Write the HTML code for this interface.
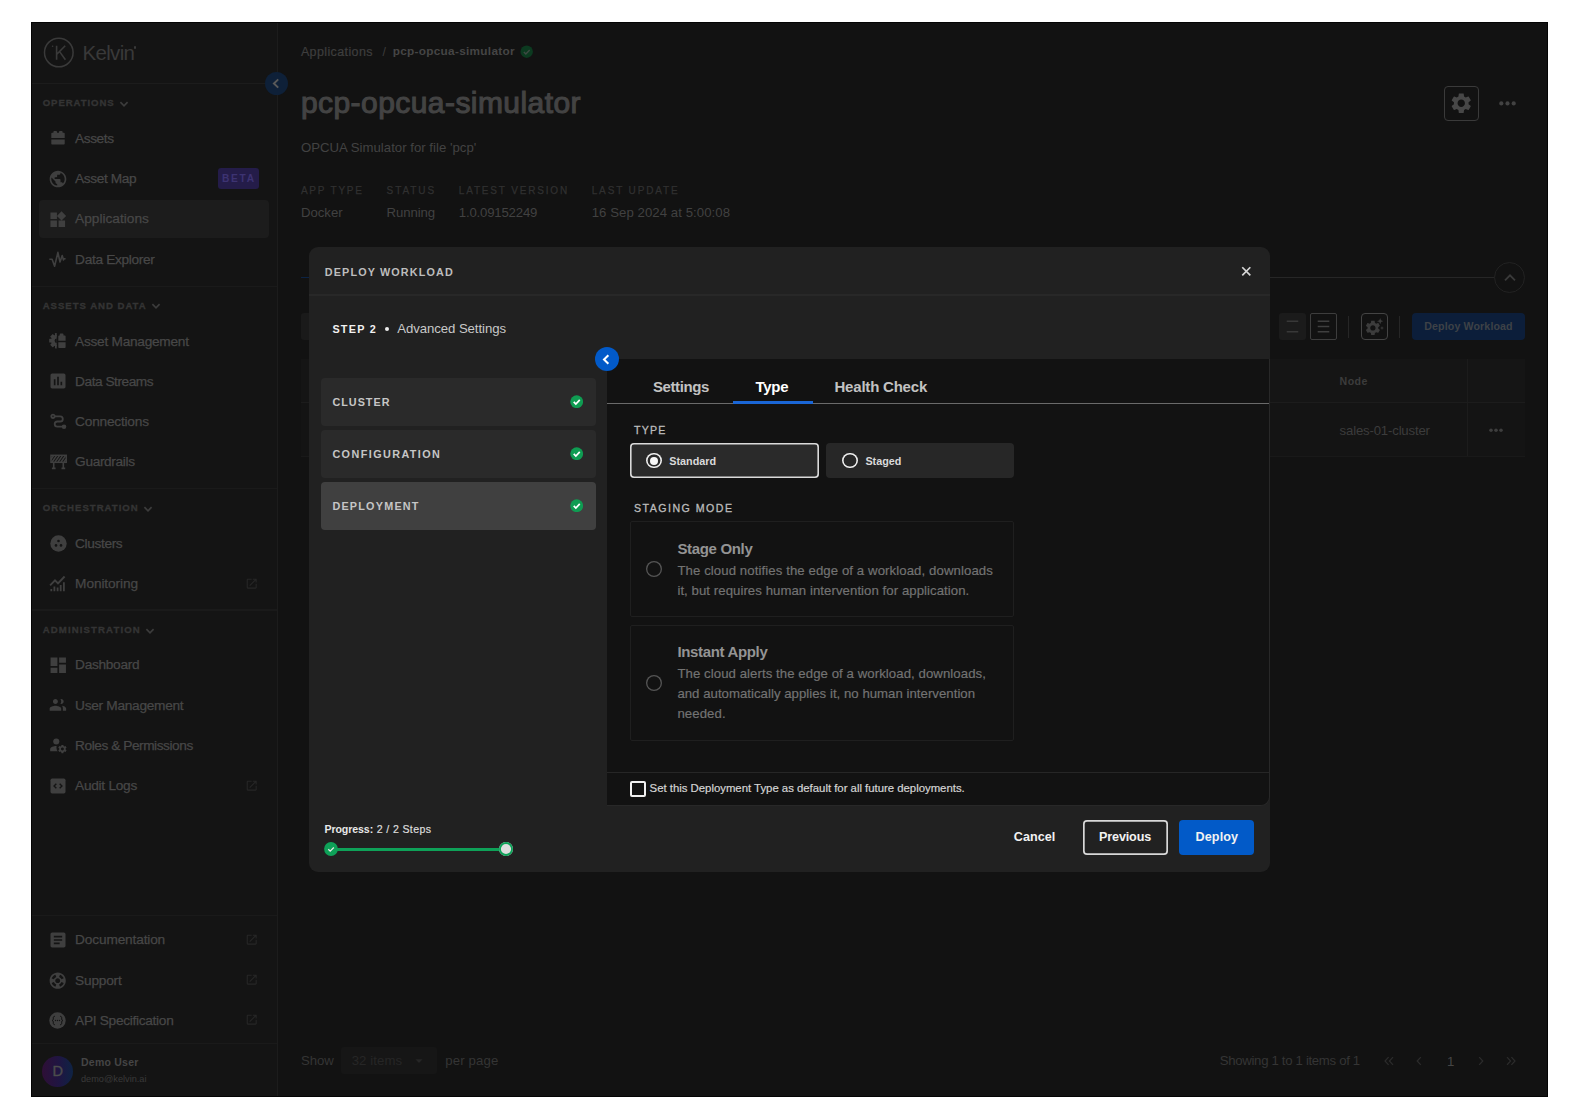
<!DOCTYPE html>
<html lang="en"><head><meta charset="utf-8"><title>Kelvin - Deploy Workload</title><style>
html,body{margin:0;padding:0;background:#fff;}
body{width:1580px;height:1120px;position:relative;overflow:hidden;font-family:"Liberation Sans",Arial,sans-serif;}
.r{position:absolute;box-sizing:border-box;display:block;}
.t{position:absolute;white-space:nowrap;line-height:1;}
</style></head><body>
<div class="r" style="left:31.0px;top:22.0px;width:1517.0px;height:1075.0px;background:#121212;border:1px solid #040404;"></div>
<div class="r" style="left:32.0px;top:23.0px;width:245.5px;height:1073.0px;background:#141414;"></div>
<div class="r" style="left:276.5px;top:23.0px;width:1.5px;height:1073.0px;background:#1c1c1c;"></div>
<svg class="r" style="left:42px;top:36px" width="34" height="34" viewBox="0 0 34 34" fill="none" stroke="#3a3a3a"><circle cx="16.800" cy="16.500" r="14.300" stroke-width="1.500"/><path d="M14.600 9.800V23.800M23.200 9.800L14.800 18.200M17.600 15.600L23.400 23.800" stroke-width="1.600"/><circle cx="10.6" cy="10.3" r="0.8" fill="#3a3a3a" stroke="none"/></svg>
<span class="t" style="left:82.4px;top:42.8px;font-size:20.5px;font-weight:400;color:#393939;letter-spacing:-0.66px;">Kelvin</span>
<div class="r" style="left:134.1px;top:46.4px;width:2.3px;height:2.3px;background:#3a3a3a;border-radius:2px;"></div>
<div class="r" style="left:32.0px;top:82.6px;width:245.0px;height:1.5px;background:#1c1c1c;"></div>
<div class="r" style="left:265.2px;top:71.7px;width:23.2px;height:23.2px;background:#0e2038;border-radius:12px;"></div>
<svg class="r" style="left:270.0px;top:76.8px;" width="13" height="13" viewBox="0 0 12 12" fill="#3d3d3d"><path d="M7.600 2.200L3.600 6l4 3.800" fill="none" stroke="#595959" stroke-width="1.800"/></svg>
<span class="t" style="left:42.7px;top:98.2px;font-size:9.6px;font-weight:700;color:#343434;letter-spacing:0.92px;-webkit-text-stroke:0.3px #343434;">OPERATIONS</span>
<svg class="r" style="left:119.0px;top:98.8px;" width="10" height="10" viewBox="0 0 10 10" fill="#3d3d3d"><path d="M1.400 3.200L5 6.800l3.600-3.600" fill="none" stroke="#3c3c3c" stroke-width="1.700"/></svg>
<span class="t" style="left:75.1px;top:131.5px;font-size:13.7px;font-weight:400;color:#474747;letter-spacing:-0.43px;-webkit-text-stroke:0.25px #474747;">Assets</span>
<svg class="r" style="left:49.9px;top:130.3px;" width="16" height="16" viewBox="0 0 16 16" fill="#3f3f3f"><path d="M1.3 7.9V3.6c0-.5.3-.8.8-.8h1.3V1.9c0-.5.3-.8.8-.8h2c.5 0 .8.3.8.8v.9h2V1.9c0-.5.3-.8.8-.8h2c.5 0 .8.3.8.8v.9h1.300c.5 0 .8.3.8.8v4.300zM1.3 9.500h13.400v4.200c0 .5-.3.8-.8.8H2.100c-.5 0-.8-.3-.8-.8z"/></svg>
<span class="t" style="left:75.1px;top:171.8px;font-size:13.7px;font-weight:400;color:#474747;letter-spacing:-0.38px;-webkit-text-stroke:0.25px #474747;">Asset Map</span>
<svg class="r" style="left:47.9px;top:168.6px;" width="20" height="20" viewBox="0 0 24 24" fill="#3f3f3f"><path d="M12 2C6.48 2 2 6.48 2 12s4.48 10 10 10 10-4.48 10-10S17.52 2 12 2zm-1 17.93c-3.95-.49-7-3.85-7-7.93 0-.62.08-1.21.21-1.79L9 15v1c0 1.1.9 2 2 2v1.93zm6.9-2.54c-.26-.81-1-1.39-1.9-1.39h-1v-3c0-.55-.45-1-1-1H8v-2h2c.55 0 1-.45 1-1V7h2c1.1 0 2-.9 2-2v-.41c2.93 1.19 5 4.06 5 7.41 0 2.08-.8 3.97-2.1 5.39z"/></svg>
<div class="r" style="left:218.0px;top:167.8px;width:41.0px;height:21.4px;background:#241c49;border-radius:3px;"></div>
<span class="t" style="left:222.0px;top:173.6px;font-size:10.2px;font-weight:700;color:#3d3372;letter-spacing:1.72px;">BETA</span>
<div class="r" style="left:38.8px;top:199.8px;width:230.2px;height:37.8px;background:#1c1c1c;border-radius:4px;"></div>
<span class="t" style="left:75.1px;top:212.2px;font-size:13.7px;font-weight:400;color:#474747;letter-spacing:0.00px;-webkit-text-stroke:0.25px #474747;">Applications</span>
<svg class="r" style="left:47.8px;top:209.6px;" width="19.5" height="19.5" viewBox="0 0 24 24" fill="#3f3f3f"><path d="M13 13v8h8v-8h-8zM3 21h8v-8H3v8zM3 3v8h8V3H3zm13.66-1.31L11 7.34 16.660 13l5.660-5.660-5.660-5.650z"/></svg>
<span class="t" style="left:75.1px;top:252.5px;font-size:13.7px;font-weight:400;color:#474747;letter-spacing:-0.33px;-webkit-text-stroke:0.25px #474747;">Data Explorer</span>
<svg class="r" style="left:49.4px;top:250.8px;" width="17" height="17" viewBox="0 0 17 17" fill="#3d3d3d"><path d="M0.300 8.200h2.800l2.500 7L8.900 1.400l2.100 9.600 2.200-6.400 1.300 4.300.7-1.100h1.400" fill="none" stroke="#3f3f3f" stroke-width="1.600" stroke-linejoin="round"/></svg>
<div class="r" style="left:32.0px;top:285.6px;width:245.0px;height:1.3px;background:#1a1a1a;"></div>
<span class="t" style="left:42.7px;top:300.5px;font-size:9.6px;font-weight:700;color:#343434;letter-spacing:0.97px;-webkit-text-stroke:0.3px #343434;">ASSETS AND DATA</span>
<svg class="r" style="left:151.0px;top:301.1px;" width="10" height="10" viewBox="0 0 10 10" fill="#3d3d3d"><path d="M1.400 3.200L5 6.800l3.600-3.600" fill="none" stroke="#3c3c3c" stroke-width="1.700"/></svg>
<span class="t" style="left:75.1px;top:334.5px;font-size:13.7px;font-weight:400;color:#474747;letter-spacing:-0.27px;-webkit-text-stroke:0.25px #474747;">Asset Management</span>
<svg class="r" style="left:49.4px;top:332.8px;" width="17" height="17" viewBox="0 0 17 17" fill="#3f3f3f"><defs><clipPath id="hg"><rect x="0" y="0" width="7.700" height="17"/></clipPath></defs><g clip-path="url(#hg)"><g transform="translate(7.900,7.700)"><circle r="5.900"/><rect x="-1.900" y="-7.700" width="3.800" height="3.500" rx=".4" transform="rotate(0)"/><rect x="-1.900" y="-7.700" width="3.800" height="3.500" rx=".4" transform="rotate(45)"/><rect x="-1.900" y="-7.700" width="3.800" height="3.500" rx=".4" transform="rotate(90)"/><rect x="-1.900" y="-7.700" width="3.800" height="3.500" rx=".4" transform="rotate(135)"/><rect x="-1.900" y="-7.700" width="3.800" height="3.500" rx=".4" transform="rotate(180)"/><rect x="-1.900" y="-7.700" width="3.800" height="3.500" rx=".4" transform="rotate(225)"/><rect x="-1.900" y="-7.700" width="3.800" height="3.500" rx=".4" transform="rotate(270)"/><rect x="-1.900" y="-7.700" width="3.800" height="3.500" rx=".4" transform="rotate(315)"/><circle r="2.300" fill="#141414"/></g></g><path d="M9.300 7.800V3.300c0-.5.300-.8.800-.8h.6V1.400c0-.5.300-.8.800-.8h2.200c.5 0 .8.300.8.800v1.100h1.300c.5 0 .8.300.8.800v4.500zM9.300 9.300h7.300v4.900c0 .5-.3.8-.8.800h-5.700c-.5 0-.8-.3-.8-.8z"/></svg>
<span class="t" style="left:75.1px;top:374.5px;font-size:13.7px;font-weight:400;color:#474747;letter-spacing:-0.47px;-webkit-text-stroke:0.25px #474747;">Data Streams</span>
<svg class="r" style="left:47.9px;top:371.3px;" width="20" height="20" viewBox="0 0 24 24" fill="#3f3f3f"><path d="M19 3H5c-1.100 0-2 .9-2 2v14c0 1.100.9 2 2 2h14c1.100 0 2-.9 2-2V5c0-1.100-.9-2-2-2zM9 17H7v-7h2v7zm4 0h-2V7h2v10zm4 0h-2v-4h2v4z"/></svg>
<span class="t" style="left:75.1px;top:414.6px;font-size:13.7px;font-weight:400;color:#474747;letter-spacing:-0.22px;-webkit-text-stroke:0.25px #474747;">Connections</span>
<svg class="r" style="left:50.0px;top:412.9px;" width="17" height="17" viewBox="0 0 17 17" fill="#3f3f3f"><g fill="none" stroke="#3f3f3f" stroke-width="1.800"><circle cx="3" cy="3.300" r="1.700"/><path d="M4.500 3.300h5.700a2.600 2.600 0 0 1 0 5.200H7.300a2.600 2.600 0 0 0 0 5.200h5"/></g><circle cx="14" cy="13.700" r="2.300"/></svg>
<span class="t" style="left:75.1px;top:455.1px;font-size:13.7px;font-weight:400;color:#474747;letter-spacing:-0.36px;-webkit-text-stroke:0.25px #474747;">Guardrails</span>
<svg class="r" style="left:49.9px;top:453.4px;" width="17" height="17" viewBox="0 0 17 17" fill="#3d3d3d"><g fill="none" stroke="#3f3f3f"><rect x="1" y="2.300" width="15.200" height="7" stroke-width="1.500"/><path d="M2 9l4.500-6.400M5 9l4.500-6.400M8 9l4.500-6.400M11 9l4.500-6.400M0.900 6.500l2.700-3.900M14 9l2-2.900" stroke-width="1.500"/><path d="M3.700 9.400v5.800M13.300 9.400v5.800M1.900 15.400h3.700M11.500 15.400h3.700" stroke-width="1.600"/></g></svg>
<div class="r" style="left:32.0px;top:487.6px;width:245.0px;height:1.3px;background:#1a1a1a;"></div>
<span class="t" style="left:42.7px;top:503.1px;font-size:9.6px;font-weight:700;color:#343434;letter-spacing:1.01px;-webkit-text-stroke:0.3px #343434;">ORCHESTRATION</span>
<svg class="r" style="left:143.0px;top:503.7px;" width="10" height="10" viewBox="0 0 10 10" fill="#3d3d3d"><path d="M1.400 3.200L5 6.800l3.600-3.600" fill="none" stroke="#3c3c3c" stroke-width="1.700"/></svg>
<span class="t" style="left:75.1px;top:537.0px;font-size:13.7px;font-weight:400;color:#474747;letter-spacing:-0.37px;-webkit-text-stroke:0.25px #474747;">Clusters</span>
<svg class="r" style="left:49.8px;top:535.3px;" width="17" height="17" viewBox="0 0 17 17" fill="#3f3f3f"><circle cx="8.500" cy="8.500" r="8.200"/><g fill="#141414"><circle cx="8.500" cy="6" r="1.300"/><circle cx="6" cy="10.400" r="1.300"/><circle cx="11" cy="10.400" r="1.300"/></g></svg>
<span class="t" style="left:75.1px;top:576.9px;font-size:13.7px;font-weight:400;color:#474747;letter-spacing:-0.11px;-webkit-text-stroke:0.25px #474747;">Monitoring</span>
<svg class="r" style="left:49.4px;top:575.2px;" width="17" height="17" viewBox="0 0 17 17" fill="#3f3f3f"><path d="M1.100 10.300L6 5.300l3 3 6.600-6.800" fill="none" stroke="#3f3f3f" stroke-width="1.900"/><path d="M1.400 14h1.800v2.300H1.400zM4.500 11.500h1.800v4.800H4.500zM7.700 12.600h1.800v3.700H7.700zM10.800 10h1.800v6.300h-1.800zM14 7.300h1.800v9H14z"/></svg>
<svg class="r" style="left:244.9px;top:576.5px;" width="13.4" height="13.4" viewBox="0 0 24 24" fill="#262626"><path d="M19 19H5V5h7V3H5c-1.11 0-2 .9-2 2v14c0 1.1.89 2 2 2h14c1.1 0 2-.9 2-2v-7h-2v7zM14 3v2h3.59l-9.83 9.83 1.41 1.41L19 6.41V10h2V3h-7z"/></svg>
<div class="r" style="left:32.0px;top:609.4px;width:245.0px;height:1.3px;background:#1a1a1a;"></div>
<span class="t" style="left:42.7px;top:625.2px;font-size:9.6px;font-weight:700;color:#343434;letter-spacing:1.12px;-webkit-text-stroke:0.3px #343434;">ADMINISTRATION</span>
<svg class="r" style="left:145.0px;top:625.8px;" width="10" height="10" viewBox="0 0 10 10" fill="#3d3d3d"><path d="M1.400 3.200L5 6.800l3.600-3.600" fill="none" stroke="#3c3c3c" stroke-width="1.700"/></svg>
<span class="t" style="left:75.1px;top:658.4px;font-size:13.7px;font-weight:400;color:#474747;letter-spacing:-0.31px;-webkit-text-stroke:0.25px #474747;">Dashboard</span>
<svg class="r" style="left:47.6px;top:655.0px;" width="20.5" height="20.5" viewBox="0 0 24 24" fill="#3f3f3f"><path d="M3 13h8V3H3v10zm0 8h8v-6H3v6zm10 0h8V11h-8v10zm0-18v6h8V3h-8z"/></svg>
<span class="t" style="left:75.1px;top:698.7px;font-size:13.7px;font-weight:400;color:#474747;letter-spacing:-0.29px;-webkit-text-stroke:0.25px #474747;">User Management</span>
<svg class="r" style="left:48.0px;top:694.8px;" width="19.8" height="19.8" viewBox="0 0 24 24" fill="#3f3f3f"><path d="M16 11c1.660 0 2.990-1.340 2.990-3S17.660 5 16 5c-.320 0-.630.050-.910.140.570.810.9 1.790.9 2.860s-.340 2.040-.9 2.860c.280.090.590.140.910.140zM9 11c1.660 0 3-1.340 3-3S10.660 5 9 5 6 6.340 6 8s1.340 3 3 3zm0 2c-2.330 0-7 1.170-7 3.500V19h14v-2.500c0-2.330-4.670-3.500-7-3.500zm7.760.160c.830.730 1.240 1.630 1.240 3.340V19h4v-2.500c0-1.980-3.120-3.090-5.240-3.340z" transform="translate(0,0)"/></svg>
<span class="t" style="left:75.1px;top:739.2px;font-size:13.7px;font-weight:400;color:#474747;letter-spacing:-0.45px;-webkit-text-stroke:0.25px #474747;">Roles &amp; Permissions</span>
<svg class="r" style="left:48.7px;top:736.0px;" width="18.4" height="18.4" viewBox="0 0 24 24" fill="#3f3f3f"><circle cx="9.500" cy="7.200" r="4"/><path d="M9.900 13.100C7 12.900 1.500 14.300 1.500 17.200V20h9.800c-1.700-1.900-1.600-5.300-1.400-6.900z"/><path d="M21.700 17.700c0-.200 0-.400 0-.600s0-.500-.100-.700l1.300-1-1.300-2.200-1.500.600c-.400-.300-.700-.500-1.100-.600L18.800 11.600h-2.600l-.200 1.600c-.400.200-.800.400-1.100.600l-1.500-.600-1.300 2.200 1.300 1c0 .200-.100.400-.100.700s0 .400.100.600l-1.300 1 1.300 2.200 1.500-.6c.300.300.700.500 1.100.600l.2 1.600h2.600l.200-1.600c.400-.200.800-.400 1.100-.600l1.500.6 1.300-2.200zm-4.200 1.200c-1 0-1.900-.8-1.900-1.900s.800-1.900 1.900-1.900 1.900.8 1.900 1.900-.900 1.900-1.900 1.900z"/></svg>
<span class="t" style="left:75.1px;top:779.4px;font-size:13.7px;font-weight:400;color:#474747;letter-spacing:-0.28px;-webkit-text-stroke:0.25px #474747;">Audit Logs</span>
<svg class="r" style="left:47.9px;top:776.2px;" width="20" height="20" viewBox="0 0 24 24" fill="#3f3f3f"><rect x="3" y="3" width="18" height="18" rx="2"/><path d="M10 9.300L7.300 12l2.700 2.700M14 9.300l2.700 2.700-2.700 2.700" fill="none" stroke="#141414" stroke-width="1.700"/></svg>
<svg class="r" style="left:244.9px;top:779.0px;" width="13.4" height="13.4" viewBox="0 0 24 24" fill="#262626"><path d="M19 19H5V5h7V3H5c-1.11 0-2 .9-2 2v14c0 1.1.89 2 2 2h14c1.1 0 2-.9 2-2v-7h-2v7zM14 3v2h3.59l-9.83 9.83 1.41 1.41L19 6.41V10h2V3h-7z"/></svg>
<div class="r" style="left:32.0px;top:914.9px;width:245.0px;height:1.3px;background:#1a1a1a;"></div>
<span class="t" style="left:75.1px;top:933.1px;font-size:13.7px;font-weight:400;color:#474747;letter-spacing:-0.16px;-webkit-text-stroke:0.25px #474747;">Documentation</span>
<svg class="r" style="left:47.9px;top:929.9px;" width="20" height="20" viewBox="0 0 24 24" fill="#3f3f3f"><path d="M19 3H5c-1.100 0-2 .9-2 2v14c0 1.100.9 2 2 2h14c1.100 0 2-.9 2-2V5c0-1.100-.9-2-2-2zm-5 14H7v-2h7v2zm3-4H7v-2h10v2zm0-4H7V7h10v2z"/></svg>
<svg class="r" style="left:244.9px;top:932.7px;" width="13.4" height="13.4" viewBox="0 0 24 24" fill="#262626"><path d="M19 19H5V5h7V3H5c-1.11 0-2 .9-2 2v14c0 1.1.89 2 2 2h14c1.1 0 2-.9 2-2v-7h-2v7zM14 3v2h3.59l-9.83 9.83 1.41 1.41L19 6.41V10h2V3h-7z"/></svg>
<span class="t" style="left:75.1px;top:973.5px;font-size:13.7px;font-weight:400;color:#474747;letter-spacing:-0.22px;-webkit-text-stroke:0.25px #474747;">Support</span>
<svg class="r" style="left:48.2px;top:970.6px;" width="19.4" height="19.4" viewBox="0 0 24 24" fill="#3f3f3f"><path d="M12 2C6.480 2 2 6.480 2 12s4.480 10 10 10 10-4.480 10-10S17.520 2 12 2zm7.460 7.120l-2.780 1.150c-.51-1.360-1.580-2.440-2.950-2.940l1.150-2.780c2.100.8 3.770 2.470 4.580 4.570zM12 15c-1.660 0-3-1.340-3-3s1.340-3 3-3 3 1.340 3 3-1.340 3-3 3zM9.130 4.540l1.170 2.780c-1.380.5-2.470 1.590-2.980 2.970L4.540 9.130c.81-2.110 2.480-3.780 4.590-4.590zM4.540 14.870l2.780-1.150c.51 1.380 1.590 2.460 2.970 2.960l-1.170 2.780c-2.100-.81-3.770-2.480-4.580-4.590zm10.340 4.590l-1.150-2.780c1.370-.51 2.450-1.590 2.950-2.970l2.780 1.170c-.81 2.100-2.480 3.770-4.580 4.580z"/></svg>
<svg class="r" style="left:244.9px;top:973.1px;" width="13.4" height="13.4" viewBox="0 0 24 24" fill="#262626"><path d="M19 19H5V5h7V3H5c-1.11 0-2 .9-2 2v14c0 1.1.89 2 2 2h14c1.1 0 2-.9 2-2v-7h-2v7zM14 3v2h3.59l-9.83 9.83 1.41 1.41L19 6.41V10h2V3h-7z"/></svg>
<span class="t" style="left:75.1px;top:1013.6px;font-size:13.7px;font-weight:400;color:#474747;letter-spacing:-0.30px;-webkit-text-stroke:0.25px #474747;">API Specification</span>
<svg class="r" style="left:49.4px;top:1011.9px;" width="17" height="17" viewBox="0 0 17 17" fill="#3f3f3f"><circle cx="8.500" cy="8.500" r="8.200"/><g fill="none" stroke="#141414" stroke-width="1"><path d="M6 4.300c-1.300 0-1.700.5-1.700 1.500v1.300c0 .8-.4 1.300-1.100 1.400.7.100 1.100.6 1.100 1.400v1.300c0 1 .4 1.500 1.700 1.500M11 4.300c1.300 0 1.700.5 1.700 1.500v1.300c0 .8.400 1.300 1.100 1.400-.7.100-1.100.6-1.100 1.400v1.300c0 1-.4 1.500-1.700 1.500"/></g><g fill="#141414"><circle cx="6.500" cy="8.500" r=".7"/><circle cx="8.500" cy="8.500" r=".7"/><circle cx="10.500" cy="8.500" r=".7"/></g></svg>
<svg class="r" style="left:244.9px;top:1013.2px;" width="13.4" height="13.4" viewBox="0 0 24 24" fill="#262626"><path d="M19 19H5V5h7V3H5c-1.11 0-2 .9-2 2v14c0 1.1.89 2 2 2h14c1.1 0 2-.9 2-2v-7h-2v7zM14 3v2h3.59l-9.83 9.83 1.41 1.41L19 6.41V10h2V3h-7z"/></svg>
<div class="r" style="left:32.0px;top:1042.6px;width:245.0px;height:1.3px;background:#1a1a1a;"></div>
<div class="r" style="left:42.2px;top:1055.5px;width:31.2px;height:31.2px;background:linear-gradient(90deg,#2e0f36 0%,#1f1542 55%,#0e2344 100%);border-radius:16px;"></div>
<span class="t" style="left:52.5px;top:1063.5px;font-size:14.5px;font-weight:400;color:#4c4c4c;-webkit-text-stroke:0.4px #4c4c4c;">D</span>
<span class="t" style="left:81.0px;top:1057.2px;font-size:10.5px;font-weight:700;color:#454545;letter-spacing:0.24px;">Demo User</span>
<span class="t" style="left:81.0px;top:1074.8px;font-size:9.2px;font-weight:400;color:#3a3a3a;letter-spacing:0.00px;">demo@kelvin.ai</span>
<span class="t" style="left:300.9px;top:45.9px;font-size:12.5px;font-weight:400;color:#3e3e3e;letter-spacing:0.38px;-webkit-text-stroke:0.2px #3e3e3e;">Applications</span>
<span class="t" style="left:382.6px;top:46.0px;font-size:12.3px;font-weight:400;color:#3c3c3c;">/</span>
<span class="t" style="left:392.7px;top:45.9px;font-size:11.8px;font-weight:700;color:#454545;letter-spacing:0.29px;">pcp-opcua-simulator</span>
<svg class="r" style="left:520.3px;top:44.9px;" width="13.4" height="13.4" viewBox="0 0 14 14" fill="#3d3d3d"><circle cx="7" cy="7" r="6.500" fill="#0c3a20"/><path d="M4 7.200l2.100 2.100L10.100 5.200" fill="none" stroke="#3f4a44" stroke-width="1.500"/></svg>
<span class="t" style="left:300.9px;top:87.6px;font-size:30px;font-weight:400;color:#434343;letter-spacing:0.44px;-webkit-text-stroke:1.1px #434343;">pcp-opcua-simulator</span>
<span class="t" style="left:300.9px;top:141.1px;font-size:13.2px;font-weight:400;color:#424242;letter-spacing:0.01px;">OPCUA Simulator for file 'pcp'</span>
<span class="t" style="left:300.9px;top:186.1px;font-size:10px;font-weight:400;color:#303030;letter-spacing:1.79px;-webkit-text-stroke:0.25px #303030;">APP TYPE</span>
<span class="t" style="left:386.6px;top:186.1px;font-size:10px;font-weight:400;color:#303030;letter-spacing:1.90px;-webkit-text-stroke:0.25px #303030;">STATUS</span>
<span class="t" style="left:458.8px;top:186.1px;font-size:10px;font-weight:400;color:#303030;letter-spacing:1.82px;-webkit-text-stroke:0.25px #303030;">LATEST VERSION</span>
<span class="t" style="left:591.7px;top:186.1px;font-size:10px;font-weight:400;color:#303030;letter-spacing:1.86px;-webkit-text-stroke:0.25px #303030;">LAST UPDATE</span>
<span class="t" style="left:300.9px;top:205.8px;font-size:13.2px;font-weight:400;color:#414141;letter-spacing:0.01px;">Docker</span>
<span class="t" style="left:386.6px;top:205.8px;font-size:13.2px;font-weight:400;color:#414141;letter-spacing:-0.11px;">Running</span>
<span class="t" style="left:458.8px;top:205.8px;font-size:13.2px;font-weight:400;color:#414141;letter-spacing:-0.19px;">1.0.09152249</span>
<span class="t" style="left:591.7px;top:205.8px;font-size:13.2px;font-weight:400;color:#414141;letter-spacing:0.06px;">16 Sep 2024 at 5:00:08</span>
<div class="r" style="left:1444.0px;top:86.0px;width:34.5px;height:35.0px;border:1.5px solid #3a3a3a;border-radius:4px;"></div>
<svg class="r" style="left:1449.0px;top:91.2px;" width="24.5" height="24.5" viewBox="0 0 24 24" fill="#474747"><path d="M19.140 12.940c.040-.3.060-.610.060-.940 0-.320-.020-.640-.070-.940l2.030-1.580c.180-.140.230-.410.120-.610l-1.920-3.320c-.120-.220-.370-.290-.590-.220l-2.390.960c-.5-.380-1.030-.7-1.620-.940l-.360-2.540c-.040-.240-.240-.410-.480-.410h-3.840c-.240 0-.430.170-.470.410l-.360 2.540c-.590.240-1.130.570-1.620.940l-2.390-.960c-.220-.080-.470 0-.590.220L2.740 8.870c-.120.210-.080.470.120.610l2.030 1.580c-.050.3-.090.630-.090.940s.020.640.070.940l-2.030 1.580c-.180.140-.230.410-.120.610l1.920 3.320c.120.220.370.290.590.220l2.390-.960c.5.380 1.030.7 1.620.940l.360 2.540c.050.240.240.410.480.410h3.840c.240 0 .440-.170.470-.410l.360-2.540c.590-.240 1.130-.560 1.620-.940l2.390.960c.220.080.470 0 .590-.220l1.920-3.320c.120-.220.070-.470-.120-.610l-2.010-1.580zM12 15.600c-1.980 0-3.600-1.620-3.600-3.600s1.620-3.600 3.600-3.600 3.600 1.620 3.600 3.600-1.620 3.600-3.600 3.600z"/></svg>
<svg class="r" style="left:1497px;top:98px" width="22" height="11" viewBox="0 0 22 11" fill="#424242"><circle cx="4.300" cy="5.400" r="2.100"/><circle cx="10.500" cy="5.400" r="2.100"/><circle cx="16.700" cy="5.400" r="2.100"/></svg>
<div class="r" style="left:300.8px;top:276.5px;width:10.0px;height:1.8px;background:#0c2344;"></div>
<div class="r" style="left:1269.0px;top:276.9px;width:226.0px;height:1.2px;background:#262626;"></div>
<div class="r" style="left:1494.3px;top:262.3px;width:30.6px;height:30.6px;background:#121212;border:1px solid #222;border-radius:16px;"></div>
<svg class="r" style="left:1502.6px;top:270.6px;" width="14" height="14" viewBox="0 0 14 14" fill="#3d3d3d"><path d="M2 9.300L7 4.300l5 5" fill="none" stroke="#3a3a3a" stroke-width="1.800"/></svg>
<div class="r" style="left:301.0px;top:312.8px;width:20.0px;height:27.0px;background:#1a1a1a;border-radius:3px;"></div>
<div class="r" style="left:1279.0px;top:313.0px;width:27.0px;height:27.0px;background:#1b1b1b;border-radius:3px;"></div>
<svg class="r" style="left:1279px;top:313px" width="27" height="27" viewBox="0 0 27 27" stroke="#383838" stroke-width="1.600"><path d="M7.700 8.300h11.600M7.700 18.700h11.600"/></svg>
<div class="r" style="left:1309.8px;top:313.0px;width:27.2px;height:27.0px;border:1px solid #3d3d3d;border-radius:2px;"></div>
<svg class="r" style="left:1310px;top:313px" width="27" height="27" viewBox="0 0 27 27" stroke="#3f3f3f" stroke-width="1.600"><path d="M7.700 8.300h11.600M7.700 13.500h11.600M7.700 18.700h11.600"/></svg>
<div class="r" style="left:1348.2px;top:315.5px;width:1.0px;height:22.0px;background:#262626;"></div>
<div class="r" style="left:1360.8px;top:313.0px;width:27.2px;height:27.0px;border:1px solid #444;border-radius:4px;"></div>
<svg class="r" style="left:1363.7px;top:318.6px;" width="17.8" height="17.8" viewBox="0 0 24 24" fill="#3c3c3c"><path d="M19.140 12.940c.040-.3.060-.610.060-.940 0-.320-.020-.640-.070-.940l2.030-1.580c.180-.140.230-.410.120-.610l-1.920-3.320c-.120-.220-.370-.290-.590-.220l-2.390.960c-.5-.380-1.030-.7-1.620-.940l-.360-2.540c-.040-.240-.240-.410-.480-.410h-3.840c-.240 0-.430.170-.470.410l-.360 2.540c-.590.240-1.130.570-1.620.940l-2.390-.960c-.220-.080-.470 0-.590.220L2.740 8.870c-.120.210-.080.470.120.610l2.030 1.580c-.050.3-.090.630-.090.940s.020.640.070.940l-2.030 1.580c-.180.140-.230.410-.120.610l1.920 3.320c.120.220.370.290.590.220l2.390-.960c.5.380 1.030.7 1.620.940l.360 2.540c.050.240.240.410.480.410h3.840c.240 0 .440-.170.470-.410l.360-2.540c.590-.240 1.130-.560 1.620-.940l2.390.960c.220.080.470 0 .590-.220l1.920-3.320c.120-.220.070-.470-.120-.610l-2.010-1.580zM12 15.600c-1.980 0-3.600-1.620-3.600-3.600s1.620-3.600 3.600-3.600 3.600 1.620 3.600 3.600-1.620 3.600-3.600 3.600z"/></svg>
<svg class="r" style="left:1377.0px;top:318.0px;" width="6.4" height="6.4" viewBox="0 0 6 6" fill="#3c3c3c"><path d="M3 0l.8 2.200L6 3l-2.200.8L3 6l-.8-2.200L0 3l2.200-.8z"/></svg>
<svg class="r" style="left:1380.0px;top:325.6px;" width="4" height="4" viewBox="0 0 6 6" fill="#3c3c3c"><path d="M3 0l.8 2.200L6 3l-2.200.8L3 6l-.8-2.200L0 3l2.200-.8z"/></svg>
<div class="r" style="left:1399.2px;top:315.5px;width:1.0px;height:22.0px;background:#262626;"></div>
<div class="r" style="left:1411.7px;top:313.0px;width:113.3px;height:27.0px;background:#0c1e3a;border-radius:4px;"></div>
<span class="t" style="left:1424.3px;top:321.2px;font-size:10.6px;font-weight:700;color:#3e4247;letter-spacing:0.14px;">Deploy Workload</span>
<div class="r" style="left:301.0px;top:358.7px;width:1224.0px;height:44.0px;background:#151515;"></div>
<div class="r" style="left:301.0px;top:402.4px;width:1224.0px;height:1.0px;background:#1c1c1c;"></div>
<div class="r" style="left:301.0px;top:403.4px;width:1224.0px;height:52.8px;background:#141414;"></div>
<div class="r" style="left:301.0px;top:456.2px;width:1224.0px;height:1.0px;background:#191919;"></div>
<div class="r" style="left:1467.0px;top:358.7px;width:1.0px;height:97.5px;background:#1c1c1c;"></div>
<span class="t" style="left:1339.6px;top:376.1px;font-size:10.6px;font-weight:700;color:#3c3c3c;letter-spacing:0.44px;">Node</span>
<span class="t" style="left:1339.6px;top:424.0px;font-size:13.2px;font-weight:400;color:#3c3c3c;letter-spacing:-0.18px;">sales-01-cluster</span>
<svg class="r" style="left:1486px;top:425px" width="20" height="11" viewBox="0 0 20 11" fill="#3e3e3e"><circle cx="5" cy="5.300" r="1.750"/><circle cx="10" cy="5.300" r="1.750"/><circle cx="15" cy="5.300" r="1.750"/></svg>
<span class="t" style="left:300.9px;top:1054.2px;font-size:13.2px;font-weight:400;color:#353535;">Show</span>
<div class="r" style="left:341.3px;top:1047.0px;width:96.0px;height:27.0px;background:#161616;border-radius:3px;"></div>
<span class="t" style="left:351.7px;top:1054.2px;font-size:13.2px;font-weight:400;color:#262626;letter-spacing:0.08px;">32 items</span>
<svg class="r" style="left:414.8px;top:1057.2px;" width="8" height="8" viewBox="0 0 8 8" fill="#262626"><path d="M0.500 2.200h7L4 6z"/></svg>
<span class="t" style="left:445.3px;top:1054.2px;font-size:13.2px;font-weight:400;color:#353535;letter-spacing:0.13px;">per page</span>
<span class="t" style="left:1219.8px;top:1054.2px;font-size:13.2px;font-weight:400;color:#353535;letter-spacing:-0.32px;">Showing 1 to 1 items of 1</span>
<svg class="r" style="left:1382.8px;top:1054.8px;" width="12" height="12" viewBox="0 0 12 12" fill="#3d3d3d"><path d="M5.6 2.200L2.0 6L5.6 9.800" fill="none" stroke="#2c2c2c" stroke-width="1.200"/><path d="M10.0 2.200L6.4 6L10.0 9.800" fill="none" stroke="#2c2c2c" stroke-width="1.200"/></svg>
<svg class="r" style="left:1413.0px;top:1054.8px;" width="12" height="12" viewBox="0 0 12 12" fill="#3d3d3d"><path d="M7.8 2.200L4.2 6L7.8 9.800" fill="none" stroke="#2c2c2c" stroke-width="1.200"/></svg>
<span class="t" style="left:1447.0px;top:1054.8px;font-size:13.2px;font-weight:400;color:#454545;">1</span>
<svg class="r" style="left:1475.0px;top:1054.8px;" width="12" height="12" viewBox="0 0 12 12" fill="#3d3d3d"><path d="M4.2 2.200L7.8 6L4.2 9.800" fill="none" stroke="#2c2c2c" stroke-width="1.200"/></svg>
<svg class="r" style="left:1505.3px;top:1054.8px;" width="12" height="12" viewBox="0 0 12 12" fill="#3d3d3d"><path d="M2.0 2.200L5.6 6L2.0 9.800" fill="none" stroke="#2c2c2c" stroke-width="1.200"/><path d="M6.4 2.200L10.0 6L6.4 9.800" fill="none" stroke="#2c2c2c" stroke-width="1.200"/></svg>
<div class="r" style="left:309.4px;top:247.3px;width:960.4px;height:624.3px;background:#212121;border-radius:9px;"></div>
<div class="r" style="left:309.4px;top:294.4px;width:960.4px;height:1.2px;background:#282828;"></div>
<span class="t" style="left:324.8px;top:266.6px;font-size:10.8px;font-weight:700;color:#bdbdbd;letter-spacing:1.14px;">DEPLOY WORKLOAD</span>
<svg class="r" style="left:1241.2px;top:266.2px;" width="10.6" height="10.6" viewBox="0 0 10 10" fill="#3d3d3d"><path d="M1.200 1.200l7.600 7.600M8.800 1.200L1.200 8.800" fill="none" stroke="#d6d6d6" stroke-width="1.600"/></svg>
<span class="t" style="left:332.4px;top:324.2px;font-size:10.8px;font-weight:700;color:#f2f2f2;letter-spacing:1.26px;">STEP 2</span>
<div class="r" style="left:384.8px;top:327.1px;width:4.4px;height:4.4px;background:#ececec;border-radius:3px;"></div>
<span class="t" style="left:397.3px;top:321.8px;font-size:13.2px;font-weight:400;color:#c8c8c8;letter-spacing:-0.08px;">Advanced Settings</span>
<div class="r" style="left:321.0px;top:378.0px;width:274.7px;height:47.8px;background:#2a2a2a;border-radius:4px;"></div>
<span class="t" style="left:332.4px;top:397.1px;font-size:10.8px;font-weight:700;color:#c6c6c6;letter-spacing:1.02px;">CLUSTER</span>
<svg class="r" style="left:569.9px;top:394.8px;" width="13.4" height="13.4" viewBox="0 0 14 14" fill="#3d3d3d"><circle cx="7" cy="7" r="6.700" fill="#0f9c52"/><path d="M3.900 7.200l2.200 2.200L10.200 5.200" fill="none" stroke="#fff" stroke-width="1.800"/></svg>
<div class="r" style="left:321.0px;top:430.0px;width:274.7px;height:47.8px;background:#2a2a2a;border-radius:4px;"></div>
<span class="t" style="left:332.4px;top:449.1px;font-size:10.8px;font-weight:700;color:#c6c6c6;letter-spacing:1.43px;">CONFIGURATION</span>
<svg class="r" style="left:569.9px;top:446.8px;" width="13.4" height="13.4" viewBox="0 0 14 14" fill="#3d3d3d"><circle cx="7" cy="7" r="6.700" fill="#0f9c52"/><path d="M3.900 7.200l2.200 2.200L10.200 5.200" fill="none" stroke="#fff" stroke-width="1.800"/></svg>
<div class="r" style="left:321.0px;top:481.9px;width:274.7px;height:47.8px;background:#404040;border-radius:4px;"></div>
<span class="t" style="left:332.4px;top:501.0px;font-size:10.8px;font-weight:700;color:#c6c6c6;letter-spacing:1.23px;">DEPLOYMENT</span>
<svg class="r" style="left:569.9px;top:498.7px;" width="13.4" height="13.4" viewBox="0 0 14 14" fill="#3d3d3d"><circle cx="7" cy="7" r="6.700" fill="#0f9c52"/><path d="M3.900 7.200l2.200 2.200L10.200 5.200" fill="none" stroke="#fff" stroke-width="1.800"/></svg>
<div class="r" style="left:607.0px;top:358.8px;width:662.8px;height:447.0px;background:#121212;border-right:1px solid #282828;border-bottom:1px solid #282828;border-bottom-right-radius:9px;"></div>
<div class="r" style="left:595.3px;top:347.4px;width:23.4px;height:23.4px;background:#025ac9;border-radius:12px;"></div>
<svg class="r" style="left:600.3px;top:352.6px;" width="13" height="13" viewBox="0 0 12 12" fill="#3d3d3d"><path d="M7.700 2L3.700 6l4 4" fill="none" stroke="#fff" stroke-width="1.900"/></svg>
<div class="r" style="left:607.0px;top:402.8px;width:662.0px;height:1.4px;background:#6a6a6a;"></div>
<div class="r" style="left:732.8px;top:401.2px;width:80.4px;height:2.9px;background:#1a66d6;"></div>
<span class="t" style="left:652.9px;top:378.7px;font-size:15px;font-weight:700;color:#c2c2c2;letter-spacing:-0.38px;">Settings</span>
<span class="t" style="left:755.4px;top:378.7px;font-size:15px;font-weight:700;color:#ffffff;letter-spacing:-0.23px;">Type</span>
<span class="t" style="left:834.5px;top:378.7px;font-size:15px;font-weight:700;color:#c2c2c2;letter-spacing:-0.21px;">Health Check</span>
<span class="t" style="left:634.0px;top:425.1px;font-size:10.6px;font-weight:400;color:#bcbcbc;letter-spacing:1.23px;-webkit-text-stroke:0.3px #bcbcbc;">TYPE</span>
<div class="r" style="left:630.0px;top:443.3px;width:188.6px;height:34.4px;background:#2a2a2a;border-radius:4px;box-shadow:inset 0 0 0 1.600px #dadada;"></div>
<div class="r" style="left:646.2px;top:452.9px;width:15.6px;height:15.6px;border-radius:8px;box-shadow:inset 0 0 0 1.600px #ececec;"></div>
<div class="r" style="left:649.9px;top:456.6px;width:8.2px;height:8.2px;background:#f8f8f8;border-radius:5px;"></div>
<span class="t" style="left:669.3px;top:455.7px;font-size:10.8px;font-weight:700;color:#dadada;">Standard</span>
<div class="r" style="left:826.0px;top:443.3px;width:188.0px;height:34.4px;background:#272727;border-radius:4px;"></div>
<div class="r" style="left:842.0px;top:452.9px;width:15.6px;height:15.6px;border-radius:8px;box-shadow:inset 0 0 0 1.600px #ececec;"></div>
<span class="t" style="left:865.4px;top:455.7px;font-size:10.8px;font-weight:700;color:#dadada;">Staged</span>
<span class="t" style="left:634.0px;top:502.9px;font-size:10.6px;font-weight:400;color:#bcbcbc;letter-spacing:1.49px;-webkit-text-stroke:0.3px #bcbcbc;">STAGING MODE</span>
<div class="r" style="left:630.0px;top:521.0px;width:384.0px;height:96.2px;border:1px solid #1f1f1f;border-radius:2px;"></div>
<div class="r" style="left:646.2px;top:561.4px;width:15.6px;height:15.6px;border-radius:8px;box-shadow:inset 0 0 0 1.300px #555;"></div>
<span class="t" style="left:677.4px;top:541.3px;font-size:15px;font-weight:700;color:#949494;letter-spacing:-0.33px;">Stage Only</span>
<span class="t" style="left:677.4px;top:563.9px;font-size:13.2px;font-weight:400;color:#737373;letter-spacing:0.09px;-webkit-text-stroke:0.18px #737373;">The cloud notifies the edge of a workload, downloads</span>
<span class="t" style="left:677.4px;top:583.9px;font-size:13.2px;font-weight:400;color:#737373;letter-spacing:0.06px;-webkit-text-stroke:0.18px #737373;">it, but requires human intervention for application.</span>
<div class="r" style="left:630.0px;top:625.0px;width:384.0px;height:116.2px;border:1px solid #1f1f1f;border-radius:2px;"></div>
<div class="r" style="left:646.2px;top:675.2px;width:15.6px;height:15.6px;border-radius:8px;box-shadow:inset 0 0 0 1.300px #555;"></div>
<span class="t" style="left:677.4px;top:644.4px;font-size:15px;font-weight:700;color:#949494;letter-spacing:-0.34px;">Instant Apply</span>
<span class="t" style="left:677.4px;top:667.3px;font-size:13.2px;font-weight:400;color:#737373;letter-spacing:0.07px;-webkit-text-stroke:0.18px #737373;">The cloud alerts the edge of a workload, downloads,</span>
<span class="t" style="left:677.4px;top:687.3px;font-size:13.2px;font-weight:400;color:#737373;letter-spacing:0.03px;-webkit-text-stroke:0.18px #737373;">and automatically applies it, no human intervention</span>
<span class="t" style="left:677.4px;top:707.3px;font-size:13.2px;font-weight:400;color:#737373;letter-spacing:0.09px;-webkit-text-stroke:0.18px #737373;">needed.</span>
<div class="r" style="left:607.0px;top:771.5px;width:662.0px;height:1.2px;background:#262626;"></div>
<div class="r" style="left:630.0px;top:781.3px;width:16.0px;height:15.8px;background:#121212;border:2px solid #f0f0f0;border-radius:2px;"></div>
<span class="t" style="left:649.6px;top:783.2px;font-size:11.4px;font-weight:400;color:#d4d4d4;letter-spacing:-0.02px;-webkit-text-stroke:0.2px #d4d4d4;">Set this Deployment Type as default for all future deployments.</span>
<span class="t" style="left:324.5px;top:823.7px;font-size:10.6px;font-weight:700;color:#e8e8e8;letter-spacing:-0.10px;">Progress:</span>
<span class="t" style="left:376.8px;top:823.7px;font-size:10.6px;font-weight:400;color:#dcdcdc;letter-spacing:0.35px;-webkit-text-stroke:0.2px #dcdcdc;">2 / 2 Steps</span>
<div class="r" style="left:331.0px;top:848.0px;width:175.0px;height:2.6px;background:#0ea158;"></div>
<svg class="r" style="left:324.0px;top:842.2px;" width="14" height="14" viewBox="0 0 14 14" fill="#3d3d3d"><circle cx="7" cy="7" r="6.900" fill="#0ea158"/><path d="M4.300 7.200l1.900 1.900L9.800 5.500" fill="none" stroke="#e8e8e8" stroke-width="1.300"/></svg>
<div class="r" style="left:498.7px;top:842.1px;width:14.4px;height:14.4px;background:#dedede;border-radius:8px;box-shadow:inset 0 0 0 1.900px #0ea158;"></div>
<span class="t" style="left:1013.8px;top:831.4px;font-size:12.6px;font-weight:700;color:#f2f2f2;letter-spacing:0.03px;">Cancel</span>
<div class="r" style="left:1083.0px;top:820.3px;width:85.0px;height:34.8px;border-radius:4px;box-shadow:inset 0 0 0 1.700px #d8d8d8;"></div>
<span class="t" style="left:1099.0px;top:831.4px;font-size:12.6px;font-weight:700;color:#f2f2f2;letter-spacing:-0.14px;">Previous</span>
<div class="r" style="left:1179.0px;top:820.3px;width:75.4px;height:34.8px;background:#025ac8;border-radius:4px;"></div>
<span class="t" style="left:1195.6px;top:831.4px;font-size:12.6px;font-weight:700;color:#f2f2f2;letter-spacing:0.09px;">Deploy</span>
</body></html>
